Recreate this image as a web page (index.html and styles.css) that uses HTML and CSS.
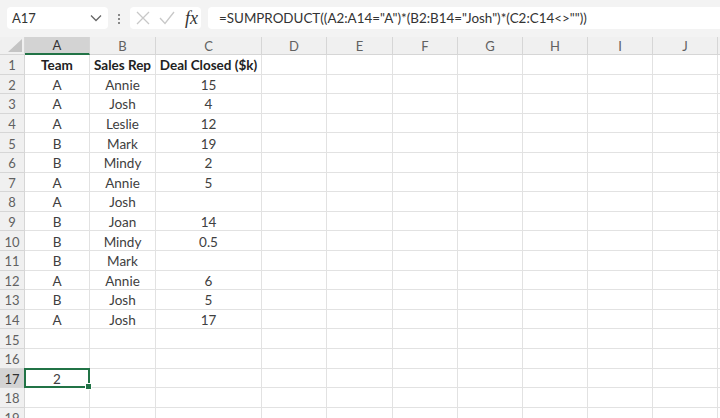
FILE: index.html
```html
<!DOCTYPE html>
<html lang="en">
<head>
    <meta charset="UTF-8">
    <title>Sheet</title>
    <link rel="stylesheet" href="styles.css">
</head>
<body>
    <div class="formula-bar">
        <div class="name-box">
            <span>A17</span>
            <svg class="chevron" width="12" height="8" viewBox="0 0 12 8"><path d="M1 1.5 L6 6.5 L11 1.5" fill="none" stroke="#666" stroke-width="1.3"/></svg>
        </div>
        <div class="grip"><i></i><i></i><i></i></div>
        <div class="fx-box">
            <svg width="14" height="14" viewBox="0 0 14 14"><path d="M1 1 L13 13 M13 1 L1 13" stroke="#c8c8c8" stroke-width="1.3"/></svg>
            <svg width="16" height="14" viewBox="0 0 16 14"><path d="M1 7 L6 12.5 L15 1" fill="none" stroke="#c8c8c8" stroke-width="1.3"/></svg>
            <span class="fx">fx</span>
        </div>
        <div class="formula">=SUMPRODUCT((A2:A14="A")*(B2:B14="Josh")*(C2:C14&lt;&gt;""))</div>
    </div>
    <div class="sheet" id="sheet"></div>
    <script>
        const cols = ['A', 'B', 'C', 'D', 'E', 'F', 'G', 'H', 'I', 'J', ''];
        const data = {
            1: ['Team', 'Sales Rep', 'Deal Closed ($k)'],
            2: ['A', 'Annie', '15'],
            3: ['A', 'Josh', '4'],
            4: ['A', 'Leslie', '12'],
            5: ['B', 'Mark', '19'],
            6: ['B', 'Mindy', '2'],
            7: ['A', 'Annie', '5'],
            8: ['A', 'Josh', ''],
            9: ['B', 'Joan', '14'],
            10: ['B', 'Mindy', '0.5'],
            11: ['B', 'Mark', ''],
            12: ['A', 'Annie', '6'],
            13: ['B', 'Josh', '5'],
            14: ['A', 'Josh', '17'],
            17: ['2']
        };
        const sheet = document.getElementById('sheet');
        let html = '<div class="corner"><svg width="14" height="13" viewBox="0 0 14 13"><path d="M14 0 L14 13 L0 13 Z" fill="#c4c4c4"/></svg></div>';
        cols.forEach(c => {
            html += `<div class="col-head${c === 'A' ? ' active' : ''}">${c}</div>`;
        });
        for (let r = 1; r <= 19; r++) {
            html += `<div class="row-head${r === 17 ? ' active' : ''}">${r}</div>`;
            const row = data[r] || [];
            cols.forEach((c, i) => {
                let cls = 'cell';
                if (r === 1) cls += ' bold';
                if (r === 17 && i === 0) cls += ' selected';
                html += `<div class="${cls}">${row[i] || ''}</div>`;
            });
        }
        sheet.innerHTML = html;
    </script>
</body>
</html>
```

FILE: styles.css
```css
body {
    margin: 0;
    font-family: Lato, "Open Sans", sans-serif;
    background-color: #fff;
    color: #404040;
    width: 720px;
    height: 418px;
    overflow: hidden;
}
.formula-bar {
    display: flex;
    align-items: center;
    gap: 7px;
    height: 37px;
    padding: 0 0 0 7px;
    background-color: #f3f3f3;
    box-sizing: border-box;
}
.name-box {
    width: 101px;
    height: 22px;
    background: #fff;
    border-radius: 4px;
    display: flex;
    align-items: center;
    justify-content: space-between;
    padding: 0 6px 0 5px;
    box-sizing: border-box;
    font-size: 13px;
    color: #333;
    margin-top: -1px;
}
.grip {
    display: flex;
    flex-direction: column;
    gap: 2px;
    padding: 0 3px;
}
.grip i {
    width: 2px;
    height: 2px;
    background: #888;
    display: block;
}
.fx-box {
    width: 71px;
    height: 22px;
    background: #fff;
    border-radius: 4px;
    display: flex;
    align-items: center;
    gap: 9px;
    padding-left: 6px;
    box-sizing: border-box;
    margin-top: -1px;
}
.fx {
    font-family: "Liberation Serif", serif;
    font-style: italic;
    font-size: 18px;
    color: #333;
    margin-left: 1px;
}
.formula {
    flex: 1;
    height: 22px;
    background: #fff;
    border-radius: 4px 0 0 4px;
    font-size: 13.4px;
    line-height: 22px;
    padding-left: 11px;
    color: #333;
    white-space: nowrap;
    margin-top: -1px;
}
.sheet {
    display: grid;
    grid-template-columns: 25px 65px 66px 106px 65px 66px 65px 65px 65px 65px 65px 20px;
    grid-template-rows: 18px repeat(19, 19.6px);
}
.corner {
    background: #f0f0f0;
    border-right: 1px solid #d6d6d6;
    border-bottom: 1px solid #d6d6d6;
    display: flex;
    align-items: flex-end;
    justify-content: flex-end;
    padding: 0 2px 2px 0;
}
.col-head, .row-head {
    background: #f0f0f0;
    color: #616161;
    font-size: 13px;
    display: flex;
    align-items: center;
    justify-content: center;
    border-right: 1px solid #d6d6d6;
    border-bottom: 1px solid #d6d6d6;
    box-sizing: border-box;
}
.row-head {
    padding-top: 2px;
}
.col-head.active {
    background: #d3d3d3;
    border-bottom: 2px solid #217346;
    color: #333;
}
.row-head.active {
    background: #d3d3d3;
    color: #333;
}
.cell {
    border-right: 1px solid #e2e2e2;
    border-bottom: 1px solid #e2e2e2;
    font-size: 13.5px;
    padding-top: 2px;
    display: flex;
    align-items: center;
    justify-content: center;
    box-sizing: border-box;
    white-space: nowrap;
}
.cell.bold {
    font-weight: bold;
    color: #222;
}
.cell.selected {
    position: relative;
    border: 2px solid #217346;
    margin: -1px 0 0 -1px;
}
.cell.selected::after {
    content: '';
    position: absolute;
    right: -4px;
    bottom: -4px;
    width: 5px;
    height: 5px;
    background: #217346;
    border: 1px solid #fff;
}
```
